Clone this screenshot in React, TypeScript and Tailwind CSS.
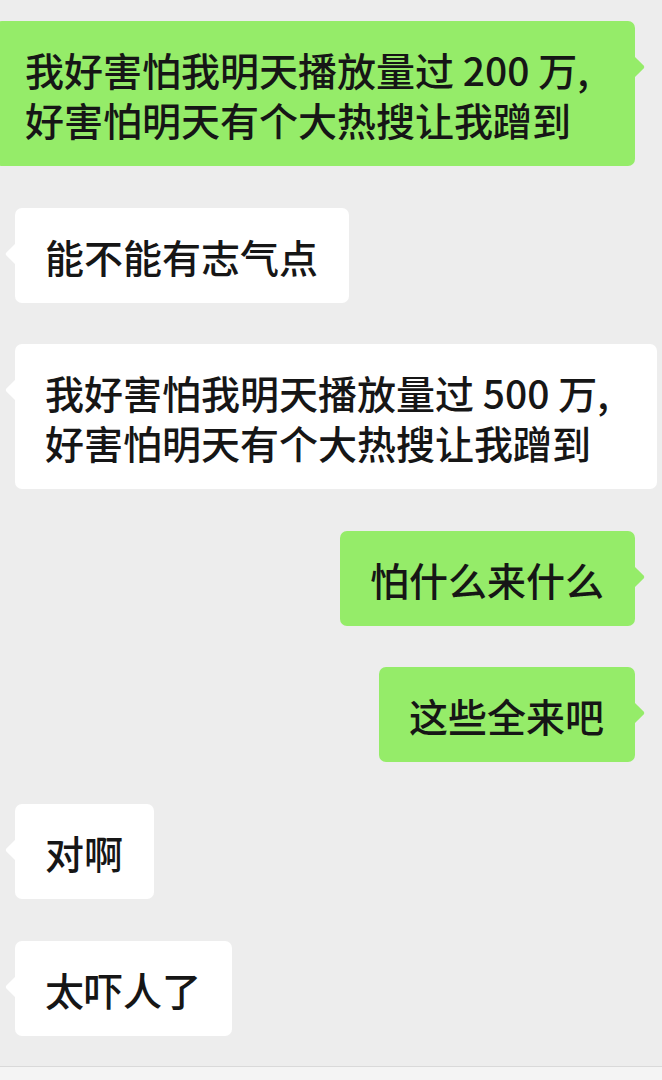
import React from "react";

type Msg = { side: "left" | "right"; lines: string[]; width?: string };

const msgs: Msg[] = [
  { side: "right", lines: ["我好害怕我明天播放量过 200 万,", "好害怕明天有个大热搜让我蹭到"], width: "w-[640px]" },
  { side: "left", lines: ["能不能有志气点"] },
  { side: "left", lines: ["我好害怕我明天播放量过 500 万,", "好害怕明天有个大热搜让我蹭到"], width: "w-[642px]" },
  { side: "right", lines: ["怕什么来什么"] },
  { side: "right", lines: ["这些全来吧"] },
  { side: "left", lines: ["对啊"] },
  { side: "left", lines: ["太吓人了"] },
];

function Tail({ side }: { side: "left" | "right" }) {
  if (side === "right") {
    return (
      <svg
        className="absolute right-[-11px] top-[35px]"
        width="12"
        height="22"
        viewBox="0 0 12 22"
      >
        <path d="M0 0 L9.6 9.6 Q11 11 9.6 12.4 L0 22 Z" fill="#95ec69" />
      </svg>
    );
  }
  return (
    <svg
      className="absolute left-[-11px] top-[35px]"
      width="12"
      height="22"
      viewBox="0 0 12 22"
    >
      <path d="M12 0 L2.4 9.6 Q1 11 2.4 12.4 L12 22 Z" fill="#ffffff" />
    </svg>
  );
}

function Bubble({ m }: { m: Msg }) {
  const isRight = m.side === "right";
  return (
    <div
      className={`relative shrink-0 rounded-[7px] pl-[30px] pr-[31px] pt-[23px] pb-[22px] text-[39px] font-medium leading-[50px] text-[#161616] whitespace-nowrap ${
        isRight ? "self-end mr-[27px] bg-[#95ec69]" : "self-start ml-[15px] bg-white"
      } ${m.width ?? ""}`}
    >
      {m.lines.map((l, i) => (
        <div key={i} className="h-[50px]">
          {l}
        </div>
      ))}
      <Tail side={m.side} />
    </div>
  );
}

export default function App() {
  return (
    <div
      className="flex h-[1080px] w-[662px] flex-col overflow-hidden bg-[#ededed]"
      style={{ fontFamily: '"Noto Sans CJK SC", "Noto Sans", sans-serif' }}
    >
      <div className="flex flex-1 flex-col gap-[41.6px] pt-[21px]">
        {msgs.map((m, i) => (
          <Bubble key={i} m={m} />
        ))}
      </div>
      <div className="h-[14px] border-t border-[#d9d9d9] bg-[#f4f4f4]" />
    </div>
  );
}
